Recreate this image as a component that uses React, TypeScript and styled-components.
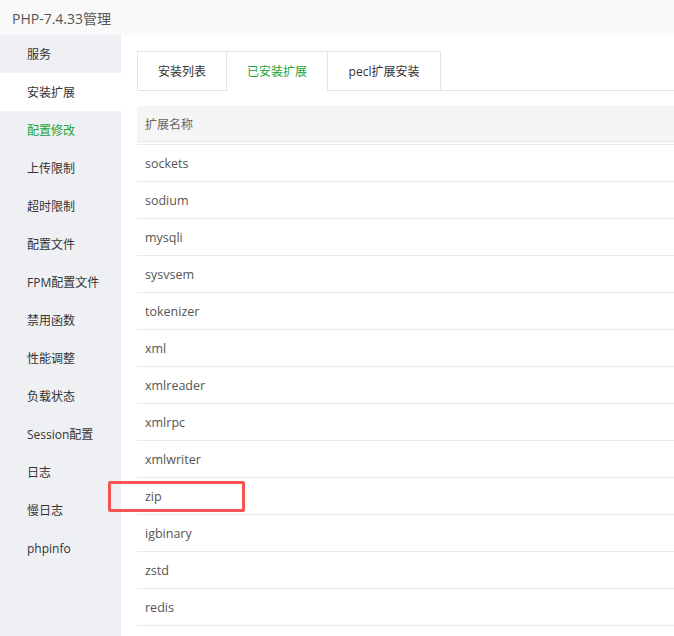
import React from "react";
import styled, { createGlobalStyle } from "styled-components";

const Global = createGlobalStyle`
  html, body { margin: 0; padding: 0; background: #fff; }
  body { font-family: "Open Sans", "Noto Sans CJK SC", sans-serif; overflow: hidden; }
  * { box-sizing: border-box; }
`;

const Page = styled.div`
  position: relative;
  width: 674px;
  height: 636px;
  display: flex;
  flex-direction: column;
  overflow: hidden;
`;

const Header = styled.div`
  height: 35px;
  flex: none;
  background: #f9f9f9;
  display: flex;
  align-items: center;
  padding-left: 12px;
  font-size: 14px;
  color: #555;
`;

const Body = styled.div`
  flex: 1;
  display: flex;
  min-height: 0;
`;

const Sidebar = styled.div`
  width: 121px;
  flex: none;
  background: #eff0f4;
  display: flex;
  flex-direction: column;
`;

const NavItem = styled.div<{ $active?: boolean; $green?: boolean }>`
  height: 38px;
  display: flex;
  align-items: center;
  padding-left: 27px;
  font-size: 12px;
  color: ${(p) => (p.$green ? "#20a53a" : "#333")};
  background: ${(p) => (p.$active ? "#fff" : "transparent")};
`;

const Content = styled.div`
  flex: 1;
  min-width: 0;
  padding: 16px 0 0 16px;
  display: flex;
  flex-direction: column;
  overflow: hidden;
`;

const Tabs = styled.div`
  display: flex;
  border-bottom: 1px solid #e2e2ea;
  height: 40px;
  flex: none;
`;

const Tab = styled.div<{ $active?: boolean; $w: number }>`
  height: 40px;
  display: flex;
  align-items: center;
  justify-content: center;
  padding: 0 20px;
  font-size: 12px;
  color: ${(p) => (p.$active ? "#20a53a" : "#333")};
  border: 1px solid #e2e2ea;
  border-left-width: ${(p) => (p.$active ? "0" : "1px")};
  border-right-width: ${(p) => (p.$active ? "0" : "1px")};
  border-bottom-color: ${(p) => (p.$active ? "#fff" : "#e2e2ea")};
  background: #fff;
  margin-bottom: -1px;
  width: ${(p) => p.$w}px;
`;

const Table = styled.div`
  margin-top: 15px;
  display: flex;
  flex-direction: column;
`;

const HeadRow = styled.div`
  height: 36px;
  background: #f5f5f5;
  border-bottom: 1px solid #e6e6ee;
  display: flex;
  align-items: center;
  padding-left: 8px;
  font-size: 12px;
  color: #666;
  margin-bottom: 2px;
`;

const Row = styled.div`
  height: 37px;
  border-top: 1px solid #e9e9f0;
  display: flex;
  align-items: center;
  padding-left: 8px;
  font-size: 12.5px;
  color: #555;
`;

const Highlight = styled.div`
  position: absolute;
  left: 108px;
  top: 481px;
  width: 137px;
  height: 31px;
  border: 3px solid #f65353;
  border-radius: 2px;
  pointer-events: none;
`;

const nav = [
  "服务",
  "安装扩展",
  "配置修改",
  "上传限制",
  "超时限制",
  "配置文件",
  "FPM配置文件",
  "禁用函数",
  "性能调整",
  "负载状态",
  "Session配置",
  "日志",
  "慢日志",
  "phpinfo",
];

const rows = [
  "sockets",
  "sodium",
  "mysqli",
  "sysvsem",
  "tokenizer",
  "xml",
  "xmlreader",
  "xmlrpc",
  "xmlwriter",
  "zip",
  "igbinary",
  "zstd",
  "redis",
  "",
];

export default function App() {
  return (
    <>
      <Global />
      <Page>
        <Header>PHP-7.4.33管理</Header>
        <Body>
          <Sidebar>
            {nav.map((n) => (
              <NavItem key={n} $active={n === "安装扩展"} $green={n === "配置修改"}>
                {n}
              </NavItem>
            ))}
          </Sidebar>
          <Content>
            <Tabs>
              <Tab $w={90}>安装列表</Tab>
              <Tab $active $w={100}>已安装扩展</Tab>
              <Tab $w={114}>pecl扩展安装</Tab>
            </Tabs>
            <Table>
              <HeadRow>扩展名称</HeadRow>
              {rows.map((r, i) => (
                <Row key={i}>{r}</Row>
              ))}
            </Table>
          </Content>
        </Body>
        <Highlight />
      </Page>
    </>
  );
}
